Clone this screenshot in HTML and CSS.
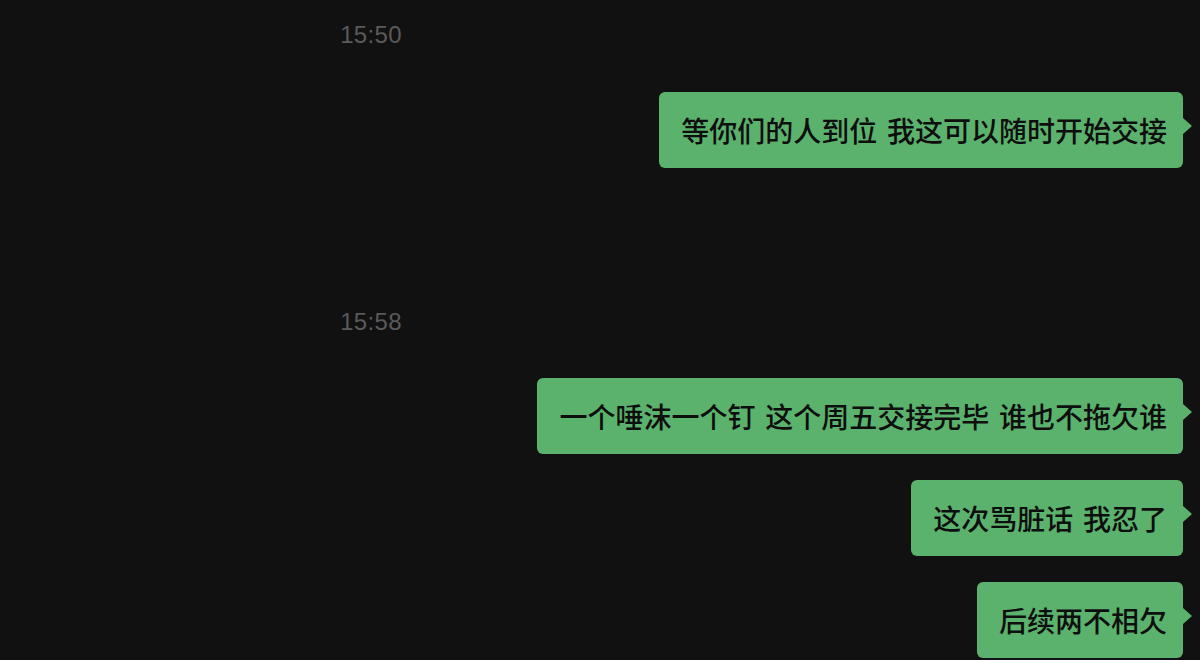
FILE: index.html
```html
<!DOCTYPE html>
<html lang="zh-CN">
  <head>
    <meta charset="utf-8" />
    <meta name="viewport" content="width=device-width, initial-scale=1.0" />
    <title>聊天记录</title>
    <link rel="stylesheet" href="styles.css">
  </head>
  <body>
    <div class="chat">
      <div class="time first">15:50</div>
      <div class="msg first-msg">
        <div class="bubble">等你们的人到位 我这可以随时开始交接</div>
      </div>

      <div class="time second">15:58</div>
      <div class="msg">
        <div class="bubble">一个唾沫一个钉 这个周五交接完毕 谁也不拖欠谁</div>
      </div>
      <div class="msg">
        <div class="bubble">这次骂脏话 我忍了</div>
      </div>
      <div class="msg">
        <div class="bubble">后续两不相欠</div>
      </div>
    </div>
  </body>
</html>
```

FILE: styles.css
```css
* {
  padding: 0;
  margin: 0;
  box-sizing: border-box;
}
body {
  background-color: #111111;
  font-family: "Noto Sans CJK SC", sans-serif;
  height: 660px;
  overflow: hidden;
}
.chat {
  display: flex;
  flex-direction: column;
  padding: 20px 17px 0 0;
}
.time {
  width: 742px;
  text-align: center;
  font-family: "Liberation Sans", Arial, sans-serif;
  font-size: 24px;
  line-height: 30px;
  letter-spacing: 0.3px;
  color: #5a5a5a;
}
.time.second {
  margin-top: 139px;
}
.msg {
  display: flex;
  justify-content: flex-end;
  margin-top: 26px;
}
.msg.first-msg,
.time + .msg {
  margin-top: 42px;
}
.time.second + .msg {
  margin-top: 41px;
}
.bubble {
  position: relative;
  background-color: #5bb26d;
  color: #0e0e0e;
  font-size: 28px;
  font-weight: 500;
  line-height: 40px;
  word-spacing: 3.5px;
  padding: 18px 16px 18px 22px;
  border-radius: 6px;
  white-space: nowrap;
}
.bubble::after {
  content: "";
  position: absolute;
  top: 26px;
  right: -9px;
  border-top: 8px solid transparent;
  border-bottom: 8px solid transparent;
  border-left: 9px solid #5bb26d;
}
```
